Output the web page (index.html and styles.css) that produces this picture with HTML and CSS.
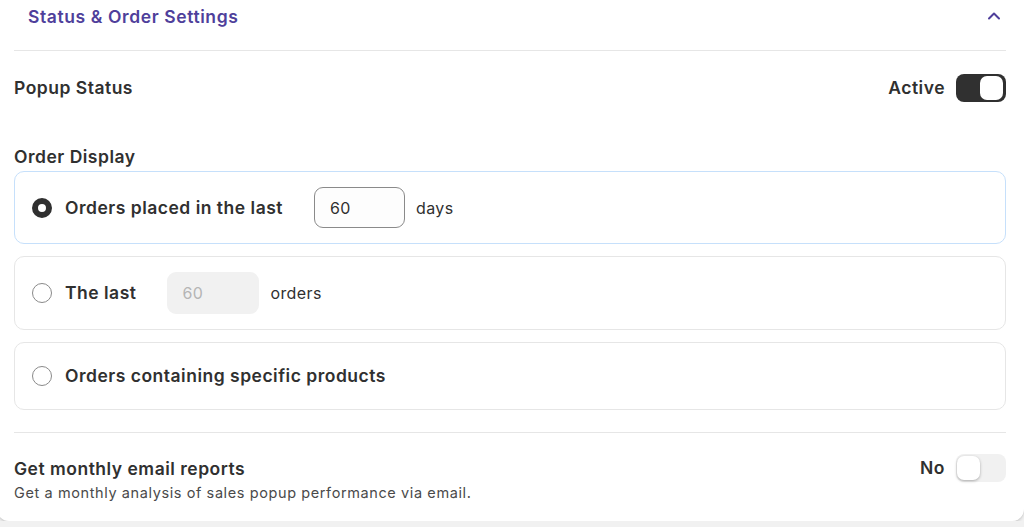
FILE: index.html
```html
<!DOCTYPE html>
<html lang="en">
<head>
  <meta charset="UTF-8"/>
  <title>Status &amp; Order Settings</title>
  <meta name="viewport" content="width=device-width, initial-scale=1.0"/>
  <link rel="stylesheet" href="styles.css">
</head>
<body>

  <div class="card">
    <div class="card-header">
      <h2>Status &amp; Order Settings</h2>
      <svg class="chevron" width="14" height="10" viewBox="0 0 14 10">
        <path d="M2 7.5 L7 2.5 L12 7.5" fill="none" stroke="#4f3f9b" stroke-width="2" stroke-linecap="round" stroke-linejoin="round"/>
      </svg>
    </div>

    <div class="setting-row">
      <span class="setting-title">Popup Status</span>
      <div class="toggle-wrap">
        <span class="toggle-label">Active</span>
        <span class="toggle on"><span class="knob"></span></span>
      </div>
    </div>

    <div class="section-label">Order Display</div>
    <div class="options">
      <label class="option selected">
        <span class="radio checked"></span>
        <span class="option-title">Orders placed in the last</span>
        <span class="num-input">60</span>
        <span class="unit">days</span>
      </label>
      <label class="option">
        <span class="radio"></span>
        <span class="option-title">The last</span>
        <span class="num-input disabled">60</span>
        <span class="unit">orders</span>
      </label>
      <label class="option short">
        <span class="radio"></span>
        <span class="option-title">Orders containing specific products</span>
      </label>
    </div>

    <div class="email-row">
      <div class="email-text">
        <div class="setting-title">Get monthly email reports</div>
        <div class="setting-desc">Get a monthly analysis of sales popup performance via email.</div>
      </div>
      <div class="toggle-wrap">
        <span class="toggle-label">No</span>
        <span class="toggle off"><span class="knob"></span></span>
      </div>
    </div>
  </div>

</body>
</html>
```

FILE: styles.css
```css
body {
  margin: 0;
  background: #f1f1f1;
  font-family: Inter, "Noto Sans", sans-serif;
  color: #303030;
  overflow: hidden;
}
.card {
  background: #fff;
  margin: 0 0 0 -3px;
  padding: 0 18px 18px 17px;
  border-radius: 0 0 12px 12px;
  box-shadow: 0 1px 0 #d4d4d4, 0 2px 3px rgba(0, 0, 0, 0.12);
}
.card-header {
  display: flex;
  justify-content: space-between;
  align-items: center;
  padding: 6px 0 22px 14px;
  border-bottom: 1px solid #e6e6e6;
}
.card-header h2 {
  margin: 0;
  font-size: 17.5px;
  letter-spacing: 0.6px;
  line-height: 22px;
  font-weight: 600;
  color: #4f3f9b;
}
.chevron {
  margin-right: 5px;
  margin-top: -2px;
}
.setting-row {
  display: flex;
  justify-content: space-between;
  align-items: center;
  margin-top: 23px;
  height: 28px;
}
.setting-title,
.section-label,
.option-title,
.toggle-label {
  font-size: 17.5px;
  letter-spacing: 0.5px;
  line-height: 22px;
  font-weight: 600;
}
.toggle-wrap {
  display: flex;
  align-items: center;
  gap: 11px;
}
.toggle {
  position: relative;
  display: block;
  width: 50px;
  height: 28px;
  border-radius: 8px;
  box-sizing: border-box;
}
.toggle.on {
  background: #303030;
}
.toggle.off {
  background: #f1f1f1;
}
.knob {
  position: absolute;
  top: 2px;
  width: 23px;
  height: 24px;
  border-radius: 7px;
  background: #fff;
}
.toggle.on .knob {
  right: 3px;
}
.toggle.off .knob {
  left: 1px;
  box-shadow: 0 1px 3px rgba(0, 0, 0, 0.3);
}
.section-label {
  margin-top: 44px;
}
.options {
  display: flex;
  flex-direction: column;
  gap: 12px;
  margin-top: 3px;
}
.option {
  display: flex;
  align-items: center;
  height: 74px;
  box-sizing: border-box;
  padding-left: 17px;
  border: 1px solid #e6e6e6;
  border-radius: 10px;
}
.option.selected {
  border-color: #c6e0fb;
  height: 73px;
}
.option.short {
  height: 68px;
}
.radio {
  width: 20px;
  height: 20px;
  box-sizing: border-box;
  border: 1px solid #8a8a8a;
  border-radius: 50%;
  margin-right: 13px;
  flex-shrink: 0;
}
.radio.checked {
  border: 6px solid #303030;
}
.option-title {
  margin-right: 31px;
}
.num-input {
  width: 91px;
  height: 41px;
  box-sizing: border-box;
  padding-left: 15px;
  display: flex;
  align-items: center;
  font-size: 16px;
  letter-spacing: 0.4px;
  border: 1px solid #8a8a8a;
  border-radius: 9px;
  background: #fdfdfd;
  margin-right: 11px;
}
.num-input.disabled {
  border: none;
  background: #f1f1f1;
  color: #b5b5b5;
  height: 42px;
  width: 92px;
}
.unit {
  font-size: 16px;
  letter-spacing: 0.4px;
}
.email-row {
  display: flex;
  justify-content: space-between;
  align-items: flex-start;
  margin-top: 22px;
  padding-top: 21px;
  border-top: 1px solid #e6e6e6;
}
.email-text {
  padding-top: 4px;
}
.setting-desc {
  font-size: 14.5px;
  letter-spacing: 0.6px;
  line-height: 20px;
  margin-top: 3px;
  color: #4a4a4a;
}
```
